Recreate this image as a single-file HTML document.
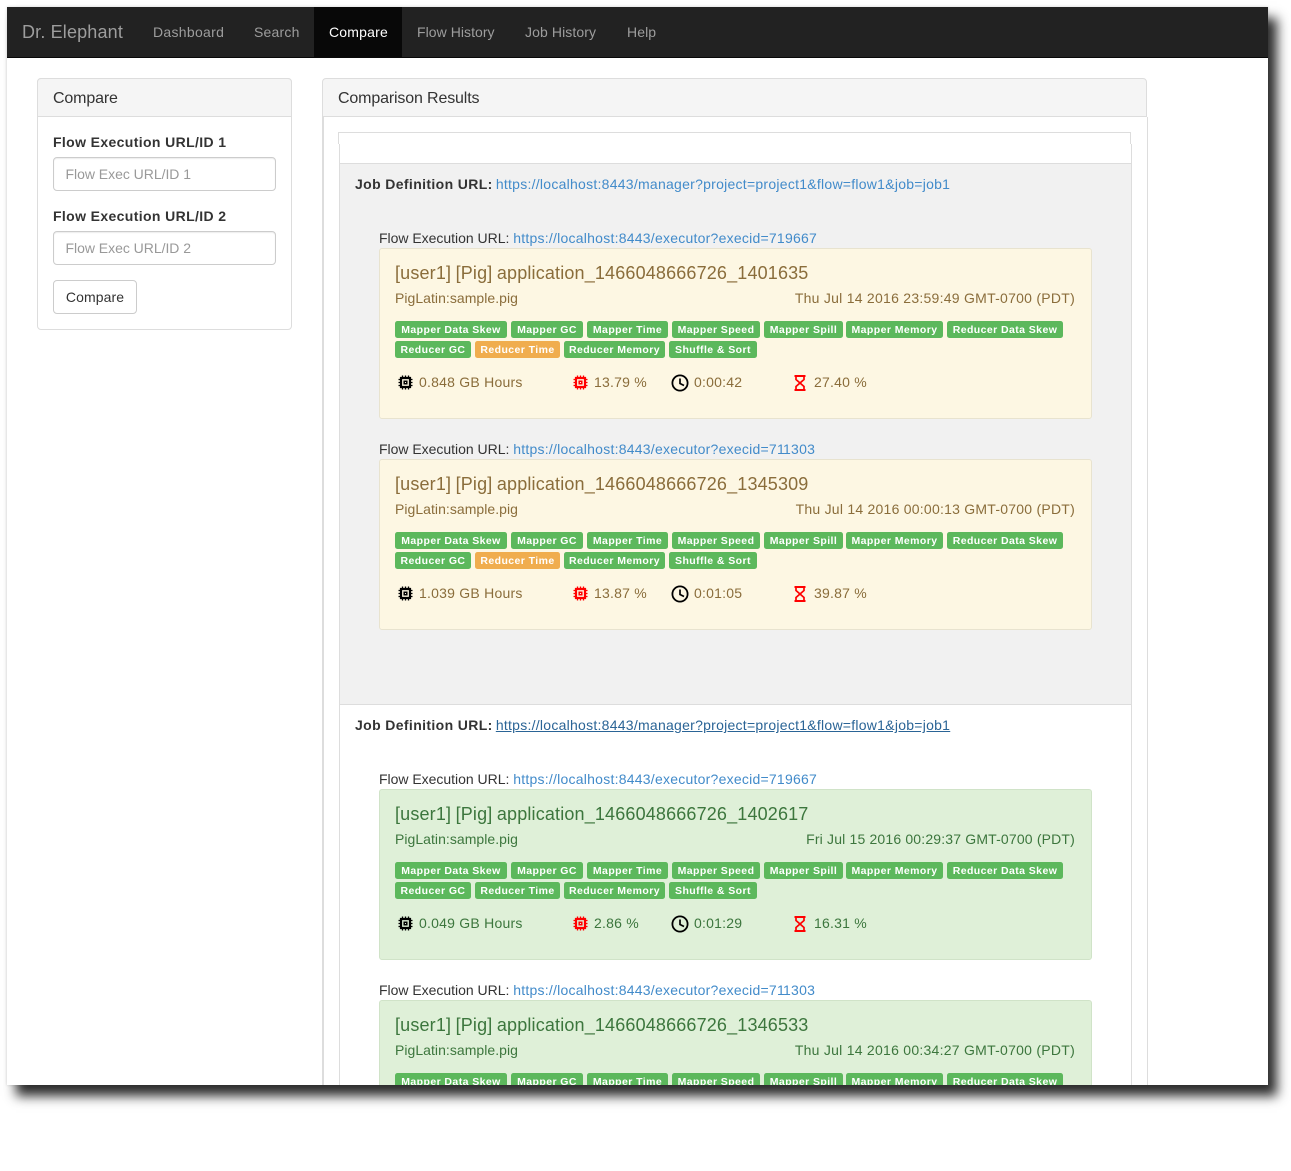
<!DOCTYPE html>
<html>
<head>
<meta charset="utf-8">
<style>
html,body{margin:0;padding:0;background:#fff;width:1291px;height:1108px;overflow:hidden}
body{font-family:"Liberation Sans",Arial,sans-serif;font-size:14px;color:#333;letter-spacing:.23px}
#shadow{position:absolute;left:7px;top:7px;width:1261px;height:1078px;box-shadow:9px 11px 11px #2c2c2c,0 0 3px rgba(0,0,0,.15)}
#clip{position:absolute;left:0;top:0;width:1291px;height:1108px;clip-path:inset(7px 23px 23px 7px);background:#fff}
.a,.t{position:absolute;white-space:nowrap}
.t{line-height:20px}
a{color:#428bca;text-decoration:none;letter-spacing:.24px}
.nav{left:7px;top:7px;width:1261px;height:50px;background:#222;border-bottom:1px solid #080808}
.nl{top:22px;color:#9d9d9d}
.box{border:1px solid #ddd;box-sizing:border-box}
.lab{font-weight:bold;letter-spacing:.37px}
.inp{left:53px;width:223px;height:34px;box-sizing:border-box;border:1px solid #ccc;border-radius:4px;background:#fff;box-shadow:inset 0 1px 1px rgba(0,0,0,.075);color:#999;padding-left:11.5px;line-height:32px;letter-spacing:-.03px}
.card{left:379px;width:713px;height:171px;box-sizing:border-box;border:1px solid #e8e3cf;border-radius:3px;background:#fdf7e3;color:#8a6d3b}
.card.g{background:#dff0d8;border-color:#d0e3c8;color:#3c763d}
.card .t{color:inherit}
.ti{left:15px;top:14px;font-size:18px;letter-spacing:.16px;word-spacing:-.7px}
.sub{left:15px;top:39px;letter-spacing:.04px}
.dt{right:16px;top:39px}
.b{position:absolute;height:17px;line-height:19px;background:#5cb85c;color:#fff;font-size:10.5px;font-weight:bold;text-align:center;border-radius:2.5px;white-space:nowrap;letter-spacing:.42px}
.o{background:#f0ad4e}
.r1{top:72px}.r2{top:92px}
svg{position:absolute;display:block}
.fl{left:379px;letter-spacing:-.02px}
.jd{left:355px}
.jd b{letter-spacing:.37px}
.jd a{margin-left:-1px;letter-spacing:.26px}
.h{font-size:16px;letter-spacing:-.15px;top:89px}
.ch{left:17.5px;top:126px;color:#000}
.cr{left:192.5px;top:126px;color:#f00}
</style>
</head>
<body>
<div id="shadow"></div>
<div id="clip">
<div class="a nav"></div>
<div class="t" style="left:22px;top:22px;font-size:18px;color:#9d9d9d;letter-spacing:.16px">Dr. Elephant</div>
<div class="t nl" style="left:153px;letter-spacing:.3px">Dashboard</div>
<div class="t nl" style="left:254px;letter-spacing:.2px">Search</div>
<div class="a" style="left:314px;top:7px;width:88px;height:50px;background:#080808"></div>
<div class="t nl" style="left:329px;color:#fff;letter-spacing:.2px">Compare</div>
<div class="t nl" style="left:417px;letter-spacing:.05px">Flow History</div>
<div class="t nl" style="left:525px;letter-spacing:.1px">Job History</div>
<div class="t nl" style="left:627px;letter-spacing:.1px">Help</div>

<div class="a box" style="left:37px;top:78px;width:255px;height:252px;border-radius:4px"></div>
<div class="a box" style="left:37px;top:78px;width:255px;height:39px;background:#f5f5f5;border-radius:4px 4px 0 0"></div>
<div class="t h" style="left:53px">Compare</div>
<div class="t lab" style="left:53px;top:132px">Flow Execution URL/ID 1</div>
<div class="a inp" style="top:157px">Flow Exec URL/ID 1</div>
<div class="t lab" style="left:53px;top:206px">Flow Execution URL/ID 2</div>
<div class="a inp" style="top:231px">Flow Exec URL/ID 2</div>
<div class="a box" style="left:53px;top:280px;width:84px;height:34px;border:1px solid #ccc;border-radius:4px;text-align:center;line-height:32px;letter-spacing:.1px">Compare</div>

<div class="a" style="left:322px;top:117px;width:2px;height:1000px;background:#ddd"></div>
<div class="a" style="left:1147px;top:117px;width:1px;height:1000px;background:#ddd"></div>
<div class="a box" style="left:322px;top:78px;width:825px;height:39px;background:#f5f5f5;border-radius:4px 4px 0 0"></div>
<div class="t h" style="left:338px">Comparison Results</div>

<div class="a" style="left:338px;top:132px;width:793px;height:1px;background:#ddd"></div>
<div class="a" style="left:338px;top:132px;width:1px;height:12px;background:#ddd"></div>
<div class="a" style="left:1130px;top:132px;width:1px;height:12px;background:#ddd"></div>
<div class="a" style="left:339px;top:144px;width:1px;height:1000px;background:#ddd"></div>
<div class="a" style="left:1131px;top:144px;width:1px;height:1000px;background:#ddd"></div>
<div class="a" style="left:340px;top:163px;width:791px;height:542px;background:#f1f1f1;border-top:1px solid #ddd;border-bottom:1px solid #ddd;box-sizing:border-box"></div>

<div class="t jd" style="top:174px"><b>Job Definition URL:</b> <a>https://localhost:8443/manager?project=project1&amp;flow=flow1&amp;job=job1</a></div>
<div class="t jd" style="top:715px"><b>Job Definition URL:</b> <a style="color:#2a6496;text-decoration:underline">https://localhost:8443/manager?project=project1&amp;flow=flow1&amp;job=job1</a></div>

<div class="t fl" style="top:228px">Flow Execution URL: <a>https://localhost:8443/executor?execid=719667</a></div>
<div class="t fl" style="top:439px">Flow Execution URL: <a>https://localhost:8443/executor?execid=7<span style="letter-spacing:-1.7px">1</span>1303</a></div>
<div class="t fl" style="top:769px">Flow Execution URL: <a>https://localhost:8443/executor?execid=719667</a></div>
<div class="t fl" style="top:980px">Flow Execution URL: <a>https://localhost:8443/executor?execid=7<span style="letter-spacing:-1.7px">1</span>1303</a></div>

<svg width="0" height="0" style="position:absolute">
<defs>
<symbol id="chip" viewBox="0 0 15 15">
<path d="M3 3h9v9H3z" fill="none" stroke="currentColor" stroke-width="2.2"/>
<path d="M6.200 6.200h2.600v2.600H6.200z" fill="none" stroke="currentColor" stroke-width="1.500"/>
<path d="M4.500 .5v2M7.500 .5v2M10.500 .5v2M4.500 12.500v2M7.500 12.500v2M10.500 12.500v2M.5 4.500h2M.5 7.500h2M.5 10.500h2M12.500 4.500h2M12.500 7.500h2M12.500 10.500h2" stroke="currentColor" stroke-width="1.300" fill="none"/>
</symbol>
<symbol id="clock" viewBox="0 0 18 18">
<circle cx="9" cy="9" r="7.600" fill="none" stroke="#000" stroke-width="1.800"/>
<path d="M9 4.500V9.500L13 11.500" fill="none" stroke="#000" stroke-width="1.700"/>
</symbol>
<symbol id="hour" viewBox="0 0 12 16">
<path d="M.5 1h11M.5 15h11" stroke="#f00" stroke-width="2" fill="none"/>
<path d="M2 1.500V4.500L10 11.500V14.500M10 1.500V4.500L2 11.500V14.500" stroke="#f00" stroke-width="1.700" fill="none"/>
</symbol>
</defs>
</svg>

<!-- card 1 -->
<div class="a card" style="top:248px">
<div class="t ti">[user1] [Pig] application_1466048666726_1401635</div>
<div class="t sub">PigLatin:sample.pig</div><div class="t dt" style="letter-spacing:.26px">Thu Jul 14 2016 23:59:49 GMT-0700 (PDT)</div>
<span class="b r1" style="left:15px;width:112px">Mapper Data Skew</span><span class="b r1" style="left:131px;width:72px">Mapper GC</span><span class="b r1" style="left:207px;width:81px">Mapper Time</span><span class="b r1" style="left:292px;width:88px">Mapper Speed</span><span class="b r1" style="left:384px;width:79px">Mapper Spill</span><span class="b r1" style="left:466px;width:97px">Mapper Memory</span><span class="b r1" style="left:567px;width:116px">Reducer Data Skew</span>
<span class="b r2" style="left:15px;width:76px">Reducer GC</span><span class="b r2 o" style="left:95px;width:85px">Reducer Time</span><span class="b r2" style="left:184px;width:101px">Reducer Memory</span><span class="b r2" style="left:289px;width:88px">Shuffle &amp; Sort</span>
<svg class="ch" width="15" height="15"><use href="#chip"/></svg><div class="t" style="left:39px;top:123px">0.848 GB Hours</div>
<svg class="cr" width="15" height="15"><use href="#chip"/></svg><div class="t" style="left:214px;top:123px">13.79 %</div>
<svg style="left:291px;top:125px" width="18" height="18"><use href="#clock"/></svg><div class="t" style="left:314px;top:123px">0:00:42</div>
<svg style="left:414px;top:126px" width="12" height="16"><use href="#hour"/></svg><div class="t" style="left:434px;top:123px">27.40 %</div>
</div>

<!-- card 2 -->
<div class="a card" style="top:459px">
<div class="t ti">[user1] [Pig] application_1466048666726_1345309</div>
<div class="t sub">PigLatin:sample.pig</div><div class="t dt" style="letter-spacing:.24px">Thu Jul 14 2016 00:00:13 GMT-0700 (PDT)</div>
<span class="b r1" style="left:15px;width:112px">Mapper Data Skew</span><span class="b r1" style="left:131px;width:72px">Mapper GC</span><span class="b r1" style="left:207px;width:81px">Mapper Time</span><span class="b r1" style="left:292px;width:88px">Mapper Speed</span><span class="b r1" style="left:384px;width:79px">Mapper Spill</span><span class="b r1" style="left:466px;width:97px">Mapper Memory</span><span class="b r1" style="left:567px;width:116px">Reducer Data Skew</span>
<span class="b r2" style="left:15px;width:76px">Reducer GC</span><span class="b r2 o" style="left:95px;width:85px">Reducer Time</span><span class="b r2" style="left:184px;width:101px">Reducer Memory</span><span class="b r2" style="left:289px;width:88px">Shuffle &amp; Sort</span>
<svg class="ch" width="15" height="15"><use href="#chip"/></svg><div class="t" style="left:39px;top:123px">1.039 GB Hours</div>
<svg class="cr" width="15" height="15"><use href="#chip"/></svg><div class="t" style="left:214px;top:123px">13.87 %</div>
<svg style="left:291px;top:125px" width="18" height="18"><use href="#clock"/></svg><div class="t" style="left:314px;top:123px">0:01:05</div>
<svg style="left:414px;top:126px" width="12" height="16"><use href="#hour"/></svg><div class="t" style="left:434px;top:123px">39.87 %</div>
</div>

<!-- card 3 -->
<div class="a card g" style="top:789px">
<div class="t ti">[user1] [Pig] application_1466048666726_1402617</div>
<div class="t sub">PigLatin:sample.pig</div><div class="t dt" style="letter-spacing:.17px">Fri Jul 15 2016 00:29:37 GMT-0700 (PDT)</div>
<span class="b r1" style="left:15px;width:112px">Mapper Data Skew</span><span class="b r1" style="left:131px;width:72px">Mapper GC</span><span class="b r1" style="left:207px;width:81px">Mapper Time</span><span class="b r1" style="left:292px;width:88px">Mapper Speed</span><span class="b r1" style="left:384px;width:79px">Mapper Spill</span><span class="b r1" style="left:466px;width:97px">Mapper Memory</span><span class="b r1" style="left:567px;width:116px">Reducer Data Skew</span>
<span class="b r2" style="left:15px;width:76px">Reducer GC</span><span class="b r2" style="left:95px;width:85px">Reducer Time</span><span class="b r2" style="left:184px;width:101px">Reducer Memory</span><span class="b r2" style="left:289px;width:88px">Shuffle &amp; Sort</span>
<svg class="ch" width="15" height="15"><use href="#chip"/></svg><div class="t" style="left:39px;top:123px">0.049 GB Hours</div>
<svg class="cr" width="15" height="15"><use href="#chip"/></svg><div class="t" style="left:214px;top:123px">2.86 %</div>
<svg style="left:291px;top:125px" width="18" height="18"><use href="#clock"/></svg><div class="t" style="left:314px;top:123px">0:01:29</div>
<svg style="left:414px;top:126px" width="12" height="16"><use href="#hour"/></svg><div class="t" style="left:434px;top:123px">16.31 %</div>
</div>

<!-- card 4 -->
<div class="a card g" style="top:1000px">
<div class="t ti">[user1] [Pig] application_1466048666726_1346533</div>
<div class="t sub">PigLatin:sample.pig</div><div class="t dt" style="letter-spacing:.26px">Thu Jul 14 2016 00:34:27 GMT-0700 (PDT)</div>
<span class="b r1" style="left:15px;width:112px">Mapper Data Skew</span><span class="b r1" style="left:131px;width:72px">Mapper GC</span><span class="b r1" style="left:207px;width:81px">Mapper Time</span><span class="b r1" style="left:292px;width:88px">Mapper Speed</span><span class="b r1" style="left:384px;width:79px">Mapper Spill</span><span class="b r1" style="left:466px;width:97px">Mapper Memory</span><span class="b r1" style="left:567px;width:116px">Reducer Data Skew</span>
</div>
</div>
</body>
</html>
